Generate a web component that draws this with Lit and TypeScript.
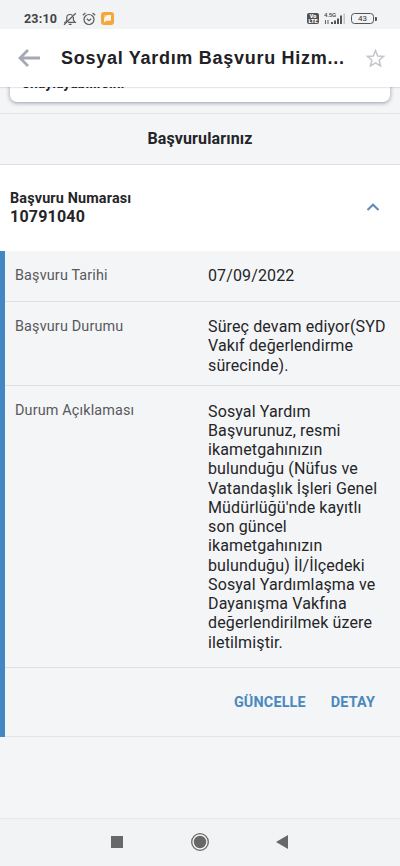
import { LitElement, html, css } from "lit";
import { customElement } from "lit/decorators.js";

const STATE_LINES = ["Süreç devam ediyor(SYD", "Vakıf değerlendirme", "sürecinde)."];
const EXPLAIN_LINES = [
  "Sosyal Yardım", "Başvurunuz, resmi", "ikametgahınızın", "bulunduğu (Nüfus ve",
  "Vatandaşlık İşleri Genel", "Müdürlüğü'nde kayıtlı", "son güncel", "ikametgahınızın",
  "bulunduğu) İl/İlçedeki", "Sosyal Yardımlaşma ve", "Dayanışma Vakfına",
  "değerlendirilmek üzere", "iletilmiştir.",
];

@customElement("app-root")
export class AppRoot extends LitElement {
  static styles = css`
    :host { display: flex; flex-direction: column; width: 400px; height: 866px; overflow: hidden; background: #f4f5f7; font-family: Roboto, "Noto Sans", sans-serif; color: #242528; }
    * { box-sizing: border-box; }
    svg { display: block; flex: none; }
    .status { height: 29px; flex: none; display: flex; align-items: center; padding: 8px 23px 0 24px; background: #f2f3f5; color: #444; }
    .clock { font-size: 12.5px; font-weight: 700; letter-spacing: .2px; width: 39px; line-height: 20px; }
    .grow { flex: 1; }
    .icons { display: flex; align-items: center; gap: 5px; }
    .volte { width: 12px; height: 11px; border-radius: 2px; background: #515151; color: #fff; font-size: 5.5px; font-weight: 900; line-height: 5px; text-align: center; padding-top: 1px; }
    .signal { width: 22px; height: 13px; margin-left: 5px; }
    .battery { display: flex; align-items: center; margin-left: 5px; }
    .cell { width: 23px; height: 11px; border: 1.5px solid #555; border-radius: 3.5px; font-size: 8px; line-height: 9px; text-align: center; color: #333; }
    .tip { width: 2px; height: 4px; background: #555; border-radius: 0 1px 1px 0; margin-left: 1px; }
    .bar { height: 58px; flex: none; background: #fff; display: flex; align-items: center; padding: 0 14px 0 17px; position: relative; box-shadow: 0 1px 1px #00000018; }
    .title { flex: 1; margin-left: 20px; white-space: nowrap; font: 700 18px/24px "Liberation Sans", Arial, sans-serif; letter-spacing: .72px; color: #202124; }
    .clip { height: 27px; flex: none; overflow: hidden; display: flex; flex-direction: column; justify-content: flex-end; padding: 0 10px 11px; border-bottom: 1px solid #e0e3e7; }
    .notice { height: 60px; flex: none; background: #fff; border-radius: 7px; box-shadow: 0 1px 4px #666b7daa; padding: 33px 12px 0; font-size: 14px; font-weight: 700; line-height: 16px; }
    .heading { height: 51px; flex: none; border-bottom: 1px solid #dcdfe3; text-align: center; font-size: 16px; font-weight: 700; letter-spacing: .12px; line-height: 50px; }
    .summary { height: 86px; flex: none; background: #fff; display: flex; align-items: center; justify-content: space-between; padding: 0 20px 0 10px; font-weight: 700; }
    .label { font-size: 14.4px; line-height: 18px; letter-spacing: .15px; }
    .number { font-size: 16px; line-height: 18px; letter-spacing: .2px; }
    .summary svg { margin-bottom: 2px; }
    .details { height: 486px; flex: none; border-left: 5px solid #4287c2; box-shadow: inset 0 -1px #e2e4e8; }
    .row { display: grid; grid-template-columns: 193px 1fr; padding: 15px 0 0 10px; border-bottom: 1px solid #dcdfe3; }
    .date { height: 51px; }
    .state { height: 84px; }
    .explain { height: 282px; }
    .key { font-size: 14.4px; line-height: 19px; letter-spacing: .15px; color: #58595c; }
    .value { font-size: 16px; line-height: 19.27px; letter-spacing: .13px; white-space: nowrap; }
    .explain .value { padding-top: .5px; }
    .actions { display: flex; justify-content: flex-end; gap: 25px; padding: 25px 25px 0 0; color: #4b88bd; font-size: 14.4px; font-weight: 700; letter-spacing: .16px; line-height: 20px; }
    .nav { height: 48px; flex: none; margin-top: auto; border-top: 1px solid #e6e8ec; background: #f2f3f5; display: flex; align-items: center; justify-content: space-between; padding: 0 112px 2px 111px; }
  `;

  private lines(lines: string[]) {
    return lines.map((line) => html`<div>${line}</div>`);
  }

  render() {
    return html`
      <div class="status">
        <span class="clock">23:10</span>
        <div class="icons">
          <svg width="14" height="14" viewBox="0 0 14 14" fill="none" stroke="#5c5c5c" stroke-width="1.2"><path d="M3 9.8 3.8 8V5.5C3.8 3.6 5 2.5 7 2.5c1 0 1.8.3 2.4.8M10.4 5v3l1.8 2.3H5M5.8 12.3h2.8M1 12.8 12.8 1.2M1.2 10.3h1.5"/></svg>
          <svg width="14" height="14" viewBox="0 0 14 14" fill="none" stroke="#5c5c5c" stroke-width="1.2"><circle cx="7" cy="7.5" r="5"/><path d="M.8 3.2 3.4 1M13.2 3.2 10.6 1M4.8 6.8 7 8.7l2.2-1.9"/></svg>
          <svg width="13" height="13" viewBox="0 0 13 13"><rect width="13" height="13" rx="3" fill="#f6a63d"/><path d="M3 3h7v5.8H5.2L3 10.5Z" fill="#fff6e6"/><path d="M3 3h3.2L3 6.2Z" fill="#f9c27b"/></svg>
        </div>
        <span class="grow"></span>
        <div class="volte"><div>Vo</div><div>LTE</div></div>
        <svg class="signal" viewBox="0 0 22 13">
          <text x="0" y="5" font-family="Roboto, sans-serif" font-size="6" font-weight="500" textLength="12" fill="#444">4.5G</text>
          <path d="M1.5 8v4M4 8v4" stroke="#666" stroke-width="1.1"/><path d="M7 10h2v2H7ZM10 8.5h2V12h-2ZM13 6.5h2V12h-2ZM16 3.5h2V12h-2Z" fill="#555"/><path d="M19.5 1.5H21V12h-1.5Z" fill="#c3c4c7"/>
        </svg>
        <div class="battery"><div class="cell">43</div><div class="tip"></div></div>
      </div>
      <div class="bar">
        <svg width="24" height="20" viewBox="0 0 24 20" fill="none" stroke="#a6a9b4" stroke-width="2.8"><path d="M23 10H3M11 2 3 10l8 8"/></svg>
        <div class="title">Sosyal Yardım Başvuru Hizm...</div>
        <svg width="21" height="20" viewBox="0 0 21 20" fill="none" stroke="#c4c6ca" stroke-width="1.5"><path d="m10.5 2.5 2.2 5.5 5.9.4-4.5 3.8 1.4 5.7-5-3.1-5 3.1 1.4-5.7L2.4 8.4l5.9-.4Z"/></svg>
      </div>
      <div class="clip"><div class="notice">onaylayabilirsin.</div></div>
      <div class="heading">Başvurularınız</div>
      <div class="summary">
        <div><div class="label">Başvuru Numarası</div><div class="number">10791040</div></div>
        <svg width="14" height="10" viewBox="0 0 14 10" fill="none" stroke="#5d8bb4" stroke-width="2"><path d="M1.5 8 7 2.7 12.5 8"/></svg>
      </div>
      <div class="details">
        <div class="row date"><div class="key">Başvuru Tarihi</div><div class="value">07/09/2022</div></div>
        <div class="row state"><div class="key">Başvuru Durumu</div><div class="value">${this.lines(STATE_LINES)}</div></div>
        <div class="row explain"><div class="key">Durum Açıklaması</div><div class="value">${this.lines(EXPLAIN_LINES)}</div></div>
        <div class="actions"><span>GÜNCELLE</span><span>DETAY</span></div>
      </div>
      <div class="nav">
        <svg width="12" height="12"><rect width="12" height="12" fill="#686868"/></svg>
        <svg width="18" height="18" viewBox="0 0 18 18"><circle cx="9" cy="9" r="8.3" fill="none" stroke="#686868" stroke-width="1.3"/><circle cx="9" cy="9" r="6.2" fill="#686868"/></svg>
        <svg width="12" height="14" viewBox="0 0 12 14"><path d="M0 7 12 0v14Z" fill="#686868"/></svg>
      </div>
    `;
  }
}
